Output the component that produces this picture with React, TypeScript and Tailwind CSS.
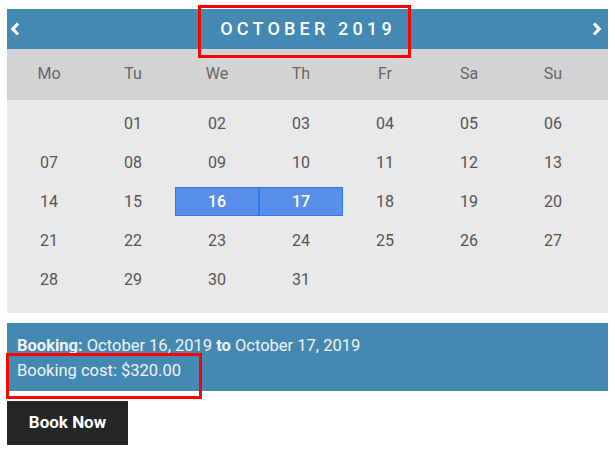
import React from "react";

const weeks: (string | null)[][] = [
  [null, "01", "02", "03", "04", "05", "06"],
  ["07", "08", "09", "10", "11", "12", "13"],
  ["14", "15", "16", "17", "18", "19", "20"],
  ["21", "22", "23", "24", "25", "26", "27"],
  ["28", "29", "30", "31", null, null, null],
];
const days = ["Mo", "Tu", "We", "Th", "Fr", "Sa", "Su"];

export default function App() {
  return (
    <div
      className="relative w-[615px] h-[452px] bg-white pt-[9px] pl-[7px]"
      style={{ fontFamily: "Roboto, 'Liberation Sans', sans-serif" }}
    >
      <div className="w-[601px]">
        <div className="h-[40px] bg-[#4489b2] flex items-center justify-between px-[3px]">
          <svg width="10" height="14" viewBox="0 0 10 14">
            <path d="M8 1.5 L2.8 7 L8 12.5" fill="none" stroke="white" strokeWidth="3.2" />
          </svg>
          <div className="text-white text-[18px] font-medium tracking-[4.2px] leading-none pl-[4px]">
            OCTOBER 2019
          </div>
          <svg width="10" height="14" viewBox="0 0 10 14" className="mr-[3px]">
            <path d="M2 1.5 L7.2 7 L2 12.5" fill="none" stroke="white" strokeWidth="3.2" />
          </svg>
        </div>
        <div className="h-[51px] bg-[#d3d3d3] grid grid-cols-[repeat(7,84px)] items-center">
          {days.map((d) => (
            <div key={d} className="text-center text-[16px] text-[#666666] pb-[2px]">
              {d}
            </div>
          ))}
        </div>
        <div className="bg-[#e9e9e9] pt-[4px] pb-[14px]">
          {weeks.map((w, i) => (
            <div key={i} className="grid grid-cols-[repeat(7,84px)] h-[39px] items-center">
              {w.map((d, j) => {
                const sel = d === "16" || d === "17";
                return sel ? (
                  <div
                    key={j}
                    className="h-[29px] bg-[#5a8fe9] border border-[#2a7af5] flex items-center justify-center text-white text-[16px] font-medium"
                  >
                    {d}
                  </div>
                ) : (
                  <div key={j} className="text-center text-[16px] text-[#555555]">
                    {d}
                  </div>
                );
              })}
            </div>
          ))}
        </div>
        <div className="mt-[10px] h-[68px] bg-[#4489b2] pl-[10px] pt-[10px] text-[16.5px] text-[#f2f2f2] leading-[25px]">
          <div>
            <span className="font-bold">Booking:</span> October 16, 2019{" "}
            <span className="font-bold">to</span> October 17, 2019
          </div>
          <div>Booking cost: $320.00</div>
        </div>
        <button className="mt-[10px] w-[121px] h-[44px] bg-[#262626] text-white text-[17px] font-bold flex items-center justify-center">
          Book Now
        </button>
      </div>
      <div className="absolute left-[198px] top-[5px] w-[213px] h-[53px] border-[3px] border-[#ff0000]" />
      <div className="absolute left-[6px] top-[353px] w-[196px] h-[46px] border-[3px] border-[#ff0000]" />
    </div>
  );
}
